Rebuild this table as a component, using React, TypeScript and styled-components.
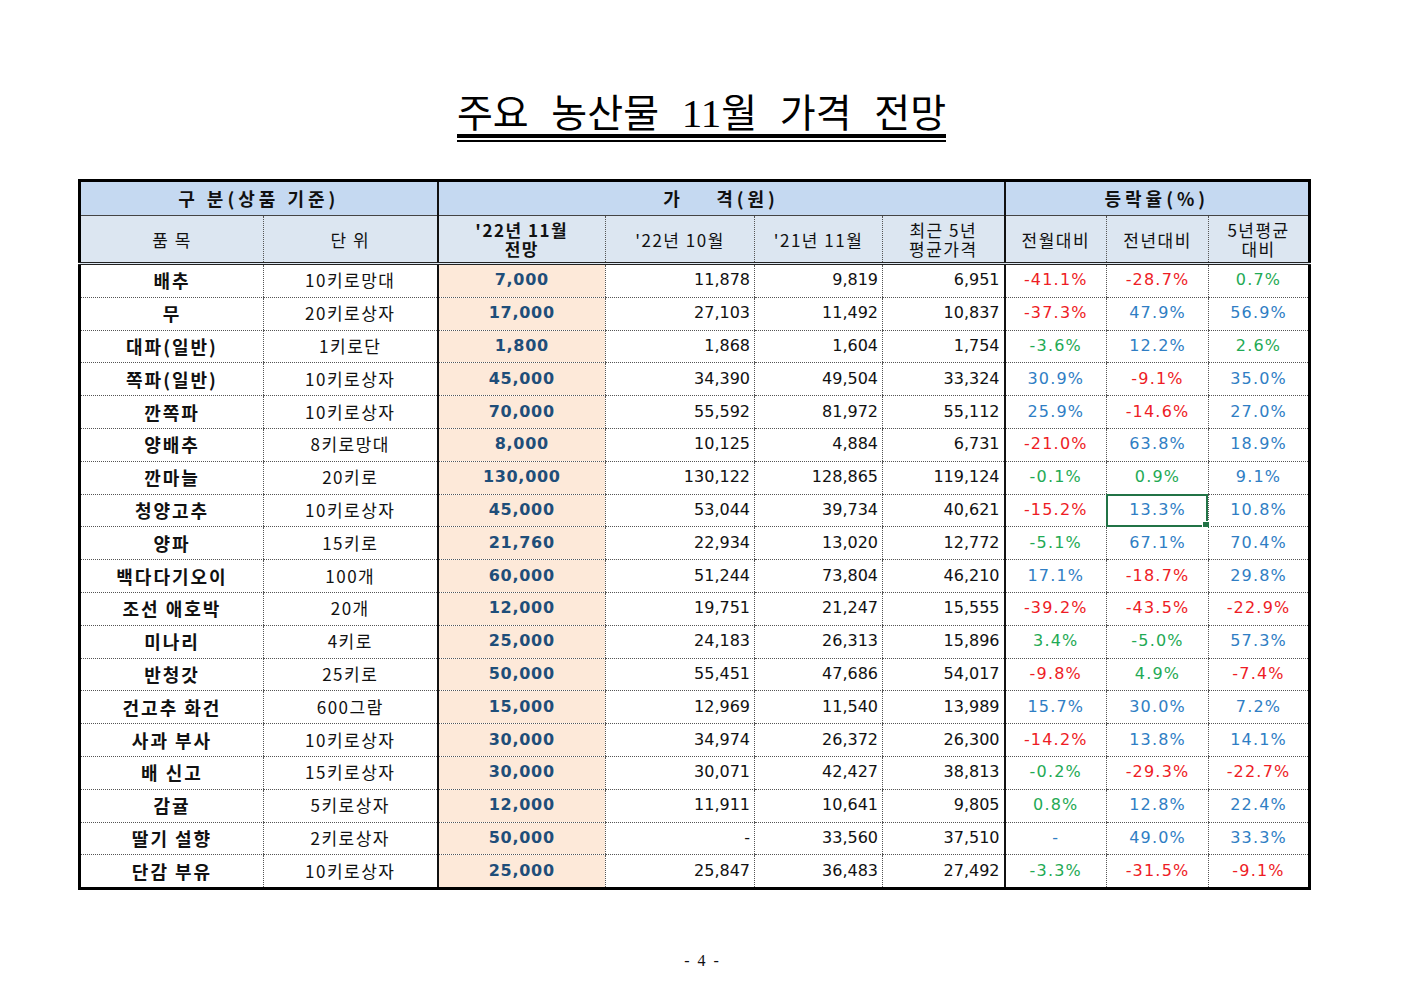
import React from "react";
import styled, { createGlobalStyle } from "styled-components";

const Global = createGlobalStyle`
  html, body { margin: 0; padding: 0; background: #fff; }
  body { font-family: "Noto Sans CJK KR", "Noto Sans", sans-serif; color: #111; }
`;

const Page = styled.div`
  width: 1403px;
  height: 992px;
  display: flex;
  flex-direction: column;
  align-items: center;
  box-sizing: border-box;
  padding-top: 90px;
`;

const Title = styled.h1`
  margin: 0;
  display: inline-block;
  font-family: "Noto Sans CJK KR", sans-serif;
  font-weight: 400;
  font-size: 39px;
  line-height: 41px;
  word-spacing: 14px;
  color: #000;
  border-bottom: 4px solid #000;
  box-shadow: 0 2px 0 0 #fff, 0 4px 0 0 #000;
`;

const SerifDigits = styled.span`
  font-family: "Liberation Serif", serif;
  font-size: 41px;
`;

const TableWrap = styled.div`
  margin-top: 41px;
  align-self: flex-start;
  margin-left: 78px;
`;

const Table = styled.table`
  border-collapse: collapse;
  table-layout: fixed;
  width: 1230px;
  border: 3px solid #000;
`;

type Tone = "group" | "sub";

const Th = styled.th<{ $tone: Tone; $bold?: boolean; $leftStrong?: boolean }>`
  background: ${(p) => (p.$tone === "group" ? "#c5d9f1" : "#dce6f1")};
  height: ${(p) => (p.$tone === "group" ? "33px" : "46px")};
  padding: 0;
  font-weight: ${(p) => (p.$bold ? 700 : 400)};
  font-size: ${(p) => (p.$tone === "group" ? "18px" : "17px")};
  line-height: 19px;
  letter-spacing: ${(p) => (p.$tone === "group" ? "4px" : "1.5px")};
  color: #111;
  text-align: center;
  border-left: ${(p) => (p.$leftStrong ? "2px solid #111" : "1px dotted #555")};
  border-top: 1px solid #444;
  border-bottom: ${(p) => (p.$tone === "group" ? "1px solid #444" : "3px double #222")};
  white-space: pre-line;
`;

type Kind = "name" | "unit" | "fore" | "num" | "pct";

const spacing: Record<Kind, string> = {
  name: "2px",
  unit: "1.5px",
  fore: "0.7px",
  num: "0",
  pct: "1.2px",
};

const sizes: Record<Kind, string> = {
  name: "18px",
  unit: "17px",
  fore: "16px",
  num: "16px",
  pct: "16px",
};

const Td = styled.td<{ $kind: Kind; $color?: string; $leftStrong?: boolean }>`
  height: 30.8px;
  padding: ${(p) => (p.$kind === "num" ? "0 4px 1px 0" : "0 0 1px 0")};
  font-size: ${(p) => sizes[p.$kind]};
  line-height: 18px;
  text-align: ${(p) => (p.$kind === "num" ? "right" : "center")};
  font-weight: ${(p) => (p.$kind === "name" || p.$kind === "fore" ? 700 : 400)};
  letter-spacing: ${(p) => spacing[p.$kind]};
  font-family: ${(p) =>
    p.$kind === "num" || p.$kind === "pct" || p.$kind === "fore"
      ? '"DejaVu Sans", "Noto Sans CJK KR", sans-serif'
      : '"Noto Sans CJK KR", sans-serif'};
  color: ${(p) => p.$color || (p.$kind === "fore" ? "#1f4e79" : "#111")};
  background: ${(p) => (p.$kind === "fore" ? "#fde9d9" : "#fff")};
  border-left: ${(p) => (p.$leftStrong ? "2px solid #111" : "1px dotted #555")};
  border-bottom: 1px dotted #555;
  position: relative;
`;

const Selection = styled.div`
  position: absolute;
  inset: -1px 0 -1px -1px;
  border: 2px solid #217346;
  pointer-events: none;
`;

const Handle = styled.div`
  position: absolute;
  right: -4px;
  bottom: -4px;
  width: 6px;
  height: 6px;
  background: #217346;
  border: 1px solid #fff;
`;

const PageNumber = styled.div`
  margin-top: auto;
  margin-bottom: 22px;
  font-family: "Liberation Serif", serif;
  font-size: 16px;
  word-spacing: 4px;
  color: #111;
`;

const R = "#ee1c25";
const G = "#1faa55";
const B = "#2f7ec4";

type Row = {
  name: string;
  unit: string;
  fore: string;
  oct: string;
  last: string;
  avg: string;
  p: [string, string][];
};

const rows: Row[] = [
  { name: "배추", unit: "10키로망대", fore: "7,000", oct: "11,878", last: "9,819", avg: "6,951", p: [["-41.1%", R], ["-28.7%", R], ["0.7%", G]] },
  { name: "무", unit: "20키로상자", fore: "17,000", oct: "27,103", last: "11,492", avg: "10,837", p: [["-37.3%", R], ["47.9%", B], ["56.9%", B]] },
  { name: "대파(일반)", unit: "1키로단", fore: "1,800", oct: "1,868", last: "1,604", avg: "1,754", p: [["-3.6%", G], ["12.2%", B], ["2.6%", G]] },
  { name: "쪽파(일반)", unit: "10키로상자", fore: "45,000", oct: "34,390", last: "49,504", avg: "33,324", p: [["30.9%", B], ["-9.1%", R], ["35.0%", B]] },
  { name: "깐쪽파", unit: "10키로상자", fore: "70,000", oct: "55,592", last: "81,972", avg: "55,112", p: [["25.9%", B], ["-14.6%", R], ["27.0%", B]] },
  { name: "양배추", unit: "8키로망대", fore: "8,000", oct: "10,125", last: "4,884", avg: "6,731", p: [["-21.0%", R], ["63.8%", B], ["18.9%", B]] },
  { name: "깐마늘", unit: "20키로", fore: "130,000", oct: "130,122", last: "128,865", avg: "119,124", p: [["-0.1%", G], ["0.9%", G], ["9.1%", B]] },
  { name: "청양고추", unit: "10키로상자", fore: "45,000", oct: "53,044", last: "39,734", avg: "40,621", p: [["-15.2%", R], ["13.3%", B], ["10.8%", B]] },
  { name: "양파", unit: "15키로", fore: "21,760", oct: "22,934", last: "13,020", avg: "12,772", p: [["-5.1%", G], ["67.1%", B], ["70.4%", B]] },
  { name: "백다다기오이", unit: "100개", fore: "60,000", oct: "51,244", last: "73,804", avg: "46,210", p: [["17.1%", B], ["-18.7%", R], ["29.8%", B]] },
  { name: "조선 애호박", unit: "20개", fore: "12,000", oct: "19,751", last: "21,247", avg: "15,555", p: [["-39.2%", R], ["-43.5%", R], ["-22.9%", R]] },
  { name: "미나리", unit: "4키로", fore: "25,000", oct: "24,183", last: "26,313", avg: "15,896", p: [["3.4%", G], ["-5.0%", G], ["57.3%", B]] },
  { name: "반청갓", unit: "25키로", fore: "50,000", oct: "55,451", last: "47,686", avg: "54,017", p: [["-9.8%", R], ["4.9%", G], ["-7.4%", R]] },
  { name: "건고추 화건", unit: "600그람", fore: "15,000", oct: "12,969", last: "11,540", avg: "13,989", p: [["15.7%", B], ["30.0%", B], ["7.2%", B]] },
  { name: "사과 부사", unit: "10키로상자", fore: "30,000", oct: "34,974", last: "26,372", avg: "26,300", p: [["-14.2%", R], ["13.8%", B], ["14.1%", B]] },
  { name: "배 신고", unit: "15키로상자", fore: "30,000", oct: "30,071", last: "42,427", avg: "38,813", p: [["-0.2%", G], ["-29.3%", R], ["-22.7%", R]] },
  { name: "감귤", unit: "5키로상자", fore: "12,000", oct: "11,911", last: "10,641", avg: "9,805", p: [["0.8%", G], ["12.8%", B], ["22.4%", B]] },
  { name: "딸기 설향", unit: "2키로상자", fore: "50,000", oct: "-", last: "33,560", avg: "37,510", p: [["-", B], ["49.0%", B], ["33.3%", B]] },
  { name: "단감 부유", unit: "10키로상자", fore: "25,000", oct: "25,847", last: "36,483", avg: "27,492", p: [["-3.3%", G], ["-31.5%", R], ["-9.1%", R]] },
];

const widths = [184, 174, 168, 149, 128, 122, 102, 102, 101];

export default function App() {
  return (
    <>
      <Global />
      <Page>
        <Title>
          주요 농산물 <SerifDigits>11</SerifDigits>월 가격 전망
        </Title>
        <TableWrap>
          <Table>
            <colgroup>
              {widths.map((w, i) => (
                <col key={i} style={{ width: w }} />
              ))}
            </colgroup>
            <thead>
              <tr>
                <Th $tone="group" $bold colSpan={2}>구 분(상품 기준)</Th>
                <Th $tone="group" $bold colSpan={4} $leftStrong>가{"\u00a0\u00a0\u00a0\u00a0"}격(원)</Th>
                <Th $tone="group" $bold colSpan={3} $leftStrong>등락율(%)</Th>
              </tr>
              <tr>
                <Th $tone="sub">품 목</Th>
                <Th $tone="sub">단 위</Th>
                <Th $tone="sub" $bold $leftStrong>{"'22년 11월\n전망"}</Th>
                <Th $tone="sub">'22년 10월</Th>
                <Th $tone="sub">'21년 11월</Th>
                <Th $tone="sub">{"최근 5년\n평균가격"}</Th>
                <Th $tone="sub" $leftStrong>전월대비</Th>
                <Th $tone="sub">전년대비</Th>
                <Th $tone="sub">{"5년평균\n대비"}</Th>
              </tr>
            </thead>
            <tbody>
              {rows.map((r, ri) => (
                <tr key={r.name}>
                  <Td $kind="name">{r.name}</Td>
                  <Td $kind="unit">{r.unit}</Td>
                  <Td $kind="fore" $leftStrong>{r.fore}</Td>
                  <Td $kind="num">{r.oct}</Td>
                  <Td $kind="num">{r.last}</Td>
                  <Td $kind="num">{r.avg}</Td>
                  {r.p.map(([v, c], pi) => (
                    <Td key={pi} $kind="pct" $color={c} $leftStrong={pi === 0}>
                      {v}
                      {ri === 7 && pi === 1 && (
                        <Selection>
                          <Handle />
                        </Selection>
                      )}
                    </Td>
                  ))}
                </tr>
              ))}
            </tbody>
          </Table>
        </TableWrap>
        <PageNumber>- 4 -</PageNumber>
      </Page>
    </>
  );
}
